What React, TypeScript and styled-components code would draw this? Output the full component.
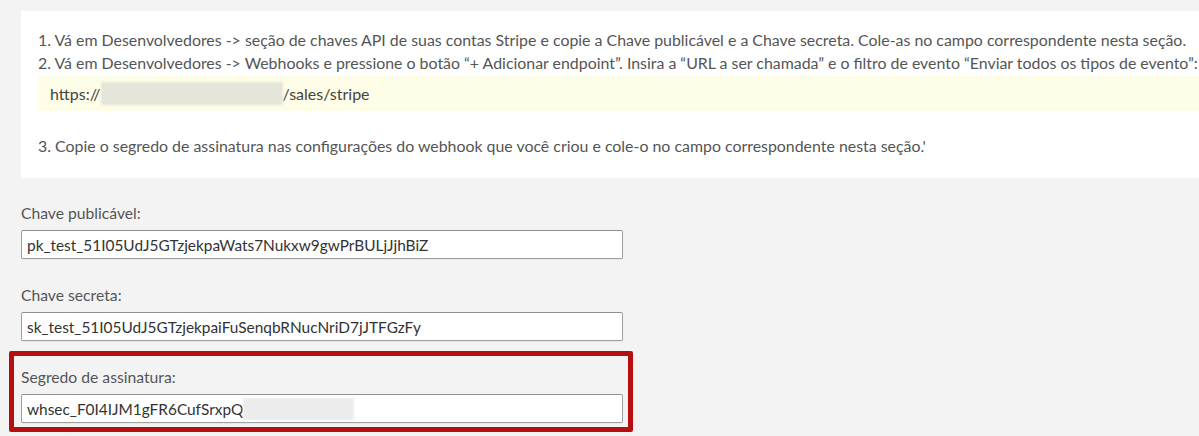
import React from "react";
import styled, { createGlobalStyle } from "styled-components";

const Global = createGlobalStyle`
  html, body { margin: 0; padding: 0; background: #f3f3f3; }
  body { font-family: Lato, "Open Sans", sans-serif; color: #555; overflow: hidden; }
`;

const Page = styled.div`
  width: 1199px;
  height: 436px;
  padding-top: 11px;
  box-sizing: border-box;
  overflow: hidden;
`;

const Panel = styled.div`
  margin-left: 21px;
  width: 1200px;
  background: #fff;
  padding: 17px 17px 21px 17px;
  font-size: 15.9px;
  line-height: 23px;
  color: #555;
  white-space: nowrap;
`;

const Line = styled.div<{ $gapTop?: number }>`
  margin-top: ${(p) => p.$gapTop ?? 0}px;
`;

const UrlBox = styled.div`
  margin-top: 2px;
  height: 35px;
  background: #fefde8;
  display: flex;
  align-items: center;
  padding-left: 12px;
  font-size: 16px;
  color: #444;
`;

const Blur = styled.span<{ $w: number; $h: number; $bg: string }>`
  display: inline-block;
  width: ${(p) => p.$w}px;
  height: ${(p) => p.$h}px;
  background: ${(p) => p.$bg};
  filter: blur(1px);
`;

const Form = styled.div`
  margin-left: 21px;
  margin-top: 25px;
  width: 602px;
  display: flex;
  flex-direction: column;
  gap: 26px;
`;

const Group = styled.div<{ $highlight?: boolean }>`
  position: relative;
  display: flex;
  flex-direction: column;
  gap: 7px;
  ${(p) =>
    p.$highlight &&
    `
    &::after {
      content: "";
      position: absolute;
      left: -12px;
      right: -10px;
      top: -16px;
      bottom: -9px;
      border: 5px solid #b70f0f;
      border-radius: 2px;
      pointer-events: none;
    }
  `}
`;

const Label = styled.label`
  font-size: 15.7px;
  line-height: 20px;
  color: #555;
`;

const Field = styled.div`
  height: 29px;
  box-sizing: border-box;
  background: #fff;
  border: 1px solid #a0a0a0;
  border-top-color: #8f8f8f;
  border-radius: 2px;
  box-shadow: 0 1px 1px rgba(0,0,0,0.06);
  display: flex;
  align-items: center;
  padding-left: 5px;
  font-size: 15.4px;
  color: #333;
  white-space: nowrap;
`;

export default function App() {
  return (
    <>
      <Global />
      <Page>
        <Panel>
          <Line>
            1. Vá em Desenvolvedores -&gt; seção de chaves API de suas contas Stripe e copie a Chave publicável e a Chave secreta. Cole-as no campo correspondente nesta seção.
          </Line>
          <Line>
            2. Vá em Desenvolvedores -&gt; Webhooks e pressione o botão “+ Adicionar endpoint”. Insira a “URL a ser chamada” e o filtro de evento “Enviar todos os tipos de evento”:
          </Line>
          <UrlBox>
            https://
            <Blur $w={182} $h={23} $bg="#e6e5da" />
            /sales/stripe
          </UrlBox>
          <Line $gapTop={23}>
            3. Copie o segredo de assinatura nas configurações do webhook que você criou e cole-o no campo correspondente nesta seção.'
          </Line>
        </Panel>
        <Form>
          <Group>
            <Label>Chave publicável:</Label>
            <Field>pk_test_51I05UdJ5GTzjekpaWats7Nukxw9gwPrBULjJjhBiZ</Field>
          </Group>
          <Group>
            <Label>Chave secreta:</Label>
            <Field>sk_test_51I05UdJ5GTzjekpaiFuSenqbRNucNriD7jJTFGzFy</Field>
          </Group>
          <Group $highlight>
            <Label>Segredo de assinatura:</Label>
            <Field>
              whsec_F0I4IJM1gFR6CufSrxpQ
              <Blur $w={111} $h={22} $bg="#ececec" />
            </Field>
          </Group>
        </Form>
      </Page>
    </>
  );
}
